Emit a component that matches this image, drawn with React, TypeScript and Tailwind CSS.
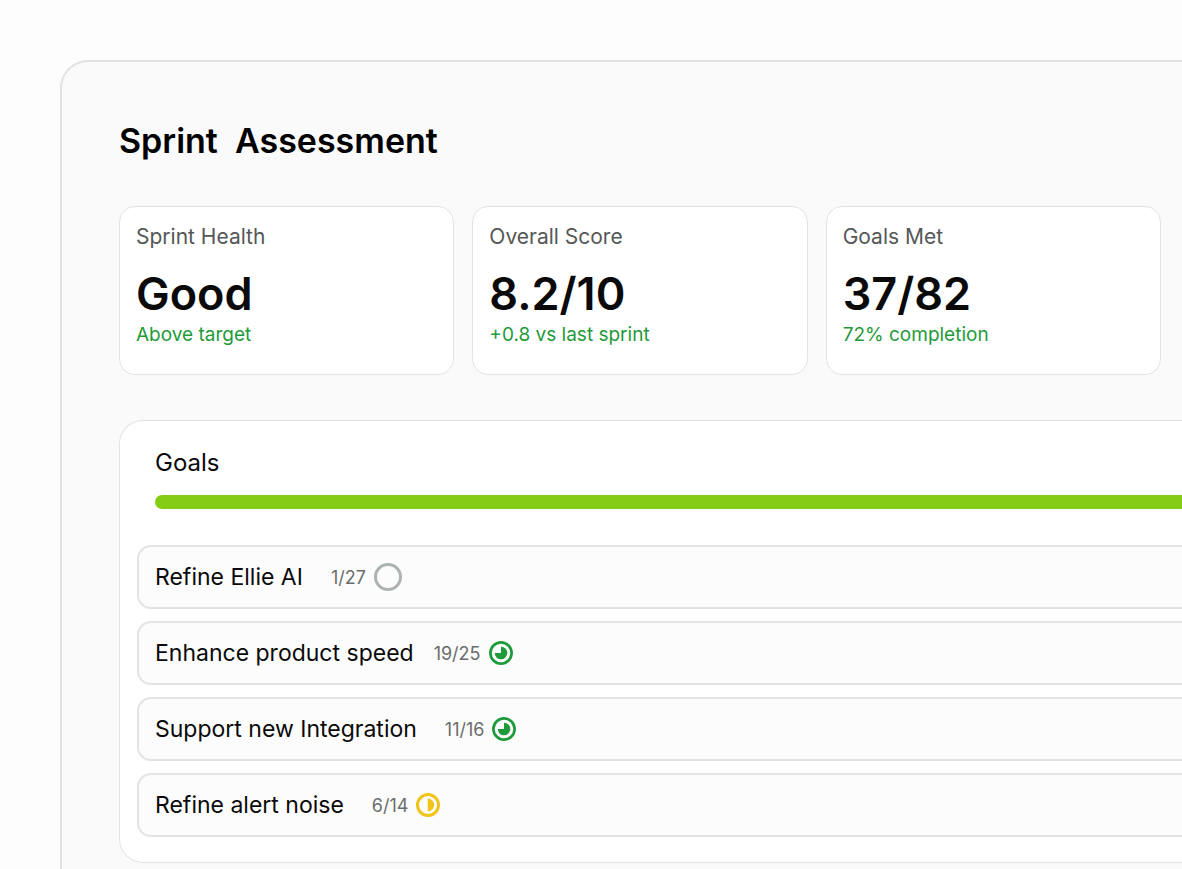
type Status = 'empty' | 'most' | 'half';

interface Stat {
  label: string;
  value: string;
  note: string;
}

interface Goal {
  name: string;
  count: string;
  status: Status;
  gap: string;
}

const stats: Stat[] = [
  { label: 'Sprint Health', value: 'Good', note: 'Above target' },
  { label: 'Overall Score', value: '8.2/10', note: '+0.8 vs last sprint' },
  { label: 'Goals Met', value: '37/82', note: '72% completion' },
];

const goals: Goal[] = [
  { name: 'Refine Ellie AI', count: '1/27', status: 'empty', gap: 'gap-7' },
  { name: 'Enhance product speed', count: '19/25', status: 'most', gap: 'gap-5' },
  { name: 'Support new Integration', count: '11/16', status: 'most', gap: 'gap-7' },
  { name: 'Refine alert noise', count: '6/14', status: 'half', gap: 'gap-7' },
];

/** Ring with a pie fill that shows how far along a goal is. */
function StatusIcon({ status }: { status: Status }) {
  if (status === 'empty') {
    return (
      <svg className="w-7 h-7 flex-shrink-0" viewBox="0 0 28 28" fill="none" aria-hidden="true">
        <circle cx="14" cy="14" r="12.5" stroke="#adb3af" strokeWidth="3" />
      </svg>
    );
  }

  if (status === 'half') {
    return (
      <svg className="w-6 h-6 flex-shrink-0" viewBox="0 0 24 24" fill="none" aria-hidden="true">
        <circle cx="12" cy="12" r="10.5" stroke="#f0c419" strokeWidth="3" />
        <path d="M11.7 5.5a6.5 6.5 0 0 1 0 13z" fill="#f0c419" />
      </svg>
    );
  }

  return (
    <svg className="w-6 h-6 flex-shrink-0" viewBox="0 0 24 24" fill="none" aria-hidden="true">
      <circle cx="12" cy="12" r="10.6" stroke="#1f9a3a" strokeWidth="2.7" />
      <path d="M12 12V5.7A6.3 6.3 0 1 1 5.7 12z" fill="#1f9a3a" />
    </svg>
  );
}

function StatCard({ label, value, note }: Stat) {
  return (
    <div className="rounded-2xl border border-[#e3e3e6] bg-white px-4 pt-4 pb-[25px]">
      <p className="text-[21px] leading-7 text-[#555756]">{label}</p>
      <p className="mt-4 text-[45px] leading-[54px] font-semibold text-[#0a0a0a]">{value}</p>
      <p className="text-[19px] leading-7 text-[#1f9a3a]">{note}</p>
    </div>
  );
}

function GoalRow({ name, count, status, gap }: Goal) {
  return (
    <li className="flex h-16 items-center rounded-l-[14px] border-y-2 border-l-2 border-[#e3e3e7] bg-[#fcfcfc] px-4">
      <div className={`flex items-center ${gap}`}>
        <span className="text-[23px] text-[#0a0a0a]">{name}</span>
        <span className="flex items-center gap-2">
          <span className="text-[18px] text-[#6b6d6c]">{count}</span>
          <StatusIcon status={status} />
        </span>
      </div>
    </li>
  );
}

export default function App() {
  return (
    <div className="flex min-h-screen flex-col bg-[#fdfdfd] pt-[60px] pl-[60px] font-['Inter',sans-serif]">
      <main className="flex-1 rounded-tl-[28px] border-t-2 border-l-2 border-[#e1e2e3] bg-[#fafafa] pt-[57px] pl-[57px]">
        <h1 className="text-[34px] leading-[44px] font-semibold whitespace-pre text-black">
          {'Sprint  Assessment'}
        </h1>

        <section className="mt-[43px] grid grid-cols-3 gap-[18px] pr-[21px]">
          {stats.map((stat) => (
            <StatCard key={stat.label} {...stat} />
          ))}
        </section>

        <section className="mt-[45px] rounded-l-3xl border-y border-l border-[#e3e3e6] bg-white pt-6 pb-[25px] pl-[17px]">
          <div className="pl-[18px]">
            <h2 className="text-2xl leading-9 text-[#0a0a0a]">Goals</h2>
            <div className="mt-3.5 h-3.5 rounded-l-full bg-[#84cc16]" />
          </div>
          <ul className="mt-9 flex flex-col gap-3">
            {goals.map((goal) => (
              <GoalRow key={goal.name} {...goal} />
            ))}
          </ul>
        </section>
      </main>
    </div>
  );
}
